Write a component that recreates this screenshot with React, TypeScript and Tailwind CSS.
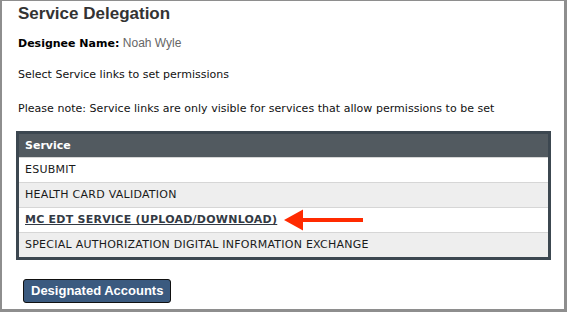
import React from "react";

const verdana = { fontFamily: '"DejaVu Sans", Verdana, sans-serif' };

export default function App() {
  const rows = [
    { name: "ESUBMIT", bg: "bg-white", link: false },
    { name: "HEALTH CARD VALIDATION", bg: "bg-[#eeeeee]", link: false },
    { name: "MC EDT SERVICE (UPLOAD/DOWNLOAD)", bg: "bg-white", link: true },
    { name: "SPECIAL AUTHORIZATION DIGITAL INFORMATION EXCHANGE", bg: "bg-[#eeeeee]", link: false },
  ];
  return (
    <div className="relative w-[567px] h-[312px] bg-white border-l-2 border-t border-r-[3px] border-b-[3px] border-[#8e8e8e] pl-[14px] pt-[3px] overflow-hidden">
      <div className="pl-[2px] h-[20px] leading-[20px] text-[17px] font-bold text-[#333333] font-['Liberation_Sans',Arial,sans-serif]">
        Service Delegation
      </div>
      <div className="pl-[2px] mt-[12px] h-[14px] leading-[14px] text-[11px] text-black" style={verdana}>
        <span className="font-bold">Designee Name:</span>{" "}
        <span className="text-[12px] text-[#666666] font-['Liberation_Sans',Arial,sans-serif]">Noah Wyle</span>
      </div>
      <div className="pl-[2px] mt-[18px] h-[14px] leading-[14px] text-[11px] text-[#111111]" style={verdana}>
        Select Service links to set permissions
      </div>
      <div className="pl-[2px] mt-[20px] h-[14px] leading-[14px] text-[11px] text-[#111111] tracking-[0.03px]" style={verdana}>
        Please note: Service links are only visible for services that allow permissions to be set
      </div>
      <div className="mt-[15px] w-[535px] border-[3px] border-[#3c4750]" style={verdana}>
        <div className="h-[23px] leading-[23px] bg-[#525a60] text-white font-bold text-[11px] pl-[6px]">
          Service
        </div>
        {rows.map((r) => (
          <div
            key={r.name}
            className={`h-[25px] border-t border-[#d6d6d6] leading-[24px] text-[11px] pl-[6px] text-[#1a1a1a] tracking-[0.25px] ${r.bg}`}
          >
            {r.link ? (
              <a href="#" className="font-bold underline text-[#333a44]">
                {r.name}
              </a>
            ) : (
              r.name
            )}
          </div>
        ))}
      </div>
      <button className="mt-[19px] ml-[7px] h-[24px] px-[7px] rounded-[3px] border border-[#111111] bg-[#3b5a7f] text-white font-bold text-[13px] leading-[22px] font-['Liberation_Sans',Arial,sans-serif]">
        Designated Accounts
      </button>
      <svg className="absolute left-[280px] top-[207px]" width="84" height="24" viewBox="0 0 84 24">
        <polygon points="2,12 21,1.5 21,22.5" fill="#ff2a00" />
        <rect x="20" y="10" width="61" height="4" fill="#ff2a00" />
      </svg>
    </div>
  );
}
